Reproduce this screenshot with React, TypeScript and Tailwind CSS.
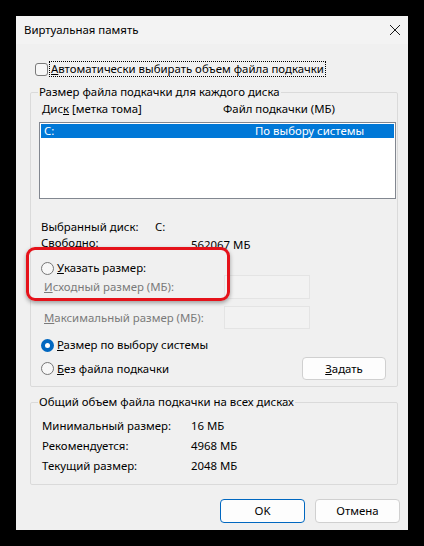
import React from 'react';

const Radio = ({ checked }: { checked?: boolean }) =>
  checked ? (
    <span className="w-[13px] h-[13px] rounded-full bg-[#0067c0] flex items-center justify-center shrink-0">
      <span className="w-[5px] h-[5px] rounded-full bg-white" />
    </span>
  ) : (
    <span className="w-[13px] h-[13px] rounded-full border border-[#767676] bg-[#f7f7f7] shrink-0" />
  );

const Row = ({ label, value }: { label: string; value: string }) => (
  <div className="flex h-[20px] items-center">
    <span className="w-[149px]">{label}</span>
    <span>{value}</span>
  </div>
);

export default function App() {
  return (
    <div className="w-[424px] h-[546px] bg-black pt-4 pl-4 font-['Noto_Sans',sans-serif] text-[11.4px] leading-4 text-black">
      <div className="relative w-[392px] h-[514px] bg-[#f0f0f0] flex flex-col">
        {/* title bar */}
        <div className="h-[28px] bg-[#f3f3f3] flex items-center pl-2 pr-[7px] shrink-0">
          <span className="flex-1">Виртуальная память</span>
          <svg width="12" height="12" viewBox="0 0 12 12">
            <path d="M1 1L11 11M11 1L1 11" stroke="#1a1a1a" strokeWidth="1" />
          </svg>
        </div>

        <div className="pl-[14px] pr-[10px] pt-[17px] flex flex-col">
          {/* auto checkbox */}
          <div className="flex items-center h-[16px] pl-[5px]">
            <span className="w-[13px] h-[13px] rounded-[3px] border border-[#7a7a7a] bg-[#f7f7f7] shrink-0" />
            <span className="ml-[1px] px-[1px] border border-dotted border-black leading-[14px]">
              <u>А</u>втоматически выбирать объем файла подкачки
            </span>
          </div>

          {/* per-disk group */}
          <fieldset className="mt-[7px] border border-[#dadada] rounded-[2px] h-[303px] pl-[8px] pr-[1px]">
            <legend className="px-[1px] -ml-[1px]">Размер файла подкачки для каждого диска</legend>
            <div className="flex h-[16px] items-center mt-[1px] pl-[3px]">
              <span className="w-[181px]">
                Дис<u>к</u> [метка тома]
              </span>
              <span>Файл подкачки (МБ)</span>
            </div>
            <div className="mt-[5px] h-[77px] bg-white border border-[#828790] p-[1px]">
              <div className="h-[14px] bg-[#0078d7] text-white flex items-center leading-[14px]">
                <span className="pl-[3px] w-[214px]">C:</span>
                <span>По выбору системы</span>
              </div>
            </div>

            <div className="mt-[20px] flex h-[16px] items-center pl-[2px]">
              <span className="w-[114px]">Выбранный диск:</span>
              <span>C:</span>
            </div>
            <div className="flex h-[16px] items-start pl-[2px]">
              <span className="w-[150px]">Свободно:</span>
              <span className="mt-[2px]">562067 МБ</span>
            </div>

            <div className="mt-[9px] flex h-[16px] items-center pl-[2px] gap-[3px]">
              <Radio />
              <span>
                <u>У</u>казать размер:
              </span>
            </div>
            <div className="-mt-[1px] flex items-center h-[24px] pl-[5px] text-[#7a7a7a]">
              <span className="w-[180px]">
                <u>И</u>сходный размер (МБ):
              </span>
              <span className="w-[86px] h-[24px] border border-[#e4e4e4] bg-[#f2f2f2]" />
            </div>
            <div className="mt-[7px] flex items-center h-[23px] pl-[5px] text-[#7a7a7a]">
              <span className="w-[180px]">
                <u>М</u>аксимальный размер (МБ):
              </span>
              <span className="w-[86px] h-[23px] border border-[#e4e4e4] bg-[#f2f2f2]" />
            </div>

            <div className="mt-[8px] flex h-[16px] items-center pl-[2px] gap-[3px]">
              <Radio checked />
              <span>
                <u>Р</u>азмер по выбору системы
              </span>
            </div>
            <div className="mt-[4px] flex h-[23px] items-center pl-[2px] gap-[3px]">
              <Radio />
              <span className="flex-1">
                <u>Б</u>ез файла подкачки
              </span>
              <button className="w-[84px] h-[23px] bg-[#fdfdfd] border border-[#d0d0d0] rounded-[4px] mr-[10px] text-[11.4px]">
                <u>З</u>адать
              </button>
            </div>
          </fieldset>

          {/* totals group */}
          <fieldset className="mt-[7px] border border-[#dadada] rounded-[2px] h-[91px] pl-[11px] pt-[6px]">
            <legend className="px-[1px] -ml-[4px]">Общий объем файла подкачки на всех дисках</legend>
            <Row label="Минимальный размер:" value="16 МБ" />
            <Row label="Рекомендуется:" value="4968 МБ" />
            <Row label="Текущий размер:" value="2048 МБ" />
          </fieldset>

          <div className="mt-[14px] flex justify-end gap-[10px] -mr-[2px]">
            <button className="w-[85px] h-[24px] bg-[#fdfdfd] border border-[#0067c0] rounded-[4px] text-[11.4px]">OK</button>
            <button className="w-[85px] h-[24px] bg-[#fdfdfd] border border-[#d0d0d0] rounded-[4px] text-[11.4px]">Отмена</button>
          </div>
        </div>

        {/* red highlight */}
        <div className="absolute left-[10px] top-[231px] w-[204px] h-[54px] border-[3px] border-[#e5121a] rounded-[9px] shadow-[0_2px_4px_rgba(0,0,0,0.35)]" />
      </div>
    </div>
  );
}
